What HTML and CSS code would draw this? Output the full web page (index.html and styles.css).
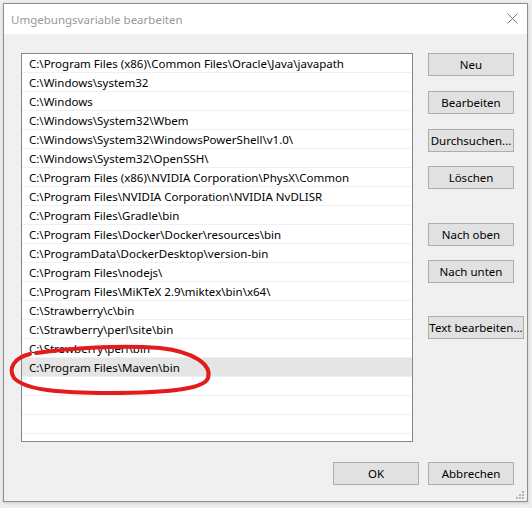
FILE: index.html
```html
<!DOCTYPE html>
<html lang="de">
<head>
<meta charset="utf-8">
<title>Umgebungsvariable bearbeiten</title>
<link rel="stylesheet" href="styles.css">
</head>
<body>
<div class="screen">
  <div class="dialog">
    <div class="titlebar">
      <span class="title">Umgebungsvariable bearbeiten</span>
      <svg class="close" width="11" height="11" viewBox="0 0 11 11"><path d="M0.5 0.5 L10.5 10.5 M10.5 0.5 L0.5 10.5" stroke="#7a7a7a" stroke-width="1" fill="none"/></svg>
    </div>
    <div class="content">
      <div class="main">
        <ul class="list">
          <li>C:\Program Files (x86)\Common Files\Oracle\Java\javapath</li>
          <li>C:\Windows\system32</li>
          <li>C:\Windows</li>
          <li>C:\Windows\System32\Wbem</li>
          <li>C:\Windows\System32\WindowsPowerShell\v1.0\</li>
          <li>C:\Windows\System32\OpenSSH\</li>
          <li>C:\Program Files (x86)\NVIDIA Corporation\PhysX\Common</li>
          <li>C:\Program Files\NVIDIA Corporation\NVIDIA NvDLISR</li>
          <li>C:\Program Files\Gradle\bin</li>
          <li>C:\Program Files\Docker\Docker\resources\bin</li>
          <li>C:\ProgramData\DockerDesktop\version-bin</li>
          <li>C:\Program Files\nodejs\</li>
          <li>C:\Program Files\MiKTeX 2.9\miktex\bin\x64\</li>
          <li>C:\Strawberry\c\bin</li>
          <li>C:\Strawberry\perl\site\bin</li>
          <li>C:\Strawberry\perl\bin</li>
          <li class="selected">C:\Program Files\Maven\bin</li>
          <li></li>
          <li></li>
          <li></li>
        </ul>
        <div class="buttons">
          <button class="btn">Neu</button>
          <button class="btn gap15">Bearbeiten</button>
          <button class="btn gap15">Durchsuchen...</button>
          <button class="btn">Löschen</button>
          <button class="btn gap-group">Nach oben</button>
          <button class="btn">Nach unten</button>
          <button class="btn wide gap-group2">Text bearbeiten...</button>
        </div>
      </div>
      <div class="footer">
        <button class="btn">OK</button>
        <button class="btn">Abbrechen</button>
      </div>
    </div>
    <svg class="grip" width="8" height="8" viewBox="0 0 8 8">
      <rect x="6" y="0" width="2" height="2" fill="#b4b4b4"/>
      <rect x="3" y="3" width="2" height="2" fill="#b4b4b4"/>
      <rect x="6" y="3" width="2" height="2" fill="#b4b4b4"/>
      <rect x="0" y="6" width="2" height="2" fill="#b4b4b4"/>
      <rect x="3" y="6" width="2" height="2" fill="#b4b4b4"/>
      <rect x="6" y="6" width="2" height="2" fill="#b4b4b4"/>
    </svg>
  </div>
  <svg class="scribble" width="532" height="508" viewBox="0 0 532 508">
    <path d="M36 353 C 70 348, 120 345, 160 348 C 195 352, 212 365, 208 378 C 204 390, 160 393, 110 393 C 60 393, 25 390, 14 378 C 8 368, 14 358, 30 354" fill="none" stroke="#e31b1b" stroke-width="4" stroke-linecap="round" stroke-linejoin="round"/>
  </svg>
</div>
</body>
</html>
```
FILE: styles.css
```css
html, body {
  margin: 0;
  padding: 0;
}
body {
  background: #eeeeee;
  font-family: "Noto Sans", "DejaVu Sans", sans-serif;
  font-size: 11.5px;
  color: #000;
}
.screen {
  position: relative;
  width: 532px;
  height: 508px;
  overflow: hidden;
  padding-top: 3px;
  padding-left: 3px;
  box-sizing: border-box;
}
.dialog {
  position: relative;
  width: 525px;
  height: 499px;
  box-sizing: border-box;
  border: 1px solid #8e8e8e;
  background: #f0f0f0;
  box-shadow: 0 1px 3px rgba(0,0,0,0.15);
  display: flex;
  flex-direction: column;
}
.titlebar {
  height: 30px;
  background: #fff;
  display: flex;
  align-items: center;
  padding-left: 7px;
  padding-right: 9px;
  flex-shrink: 0;
}
.title {
  color: #999999;
  font-size: 11.5px;
}
.close {
  margin-left: auto;
  margin-top: -2px;
}
.content {
  padding: 19px 13px 0 17px;
  display: flex;
  flex-direction: column;
}
.main {
  display: flex;
  gap: 15px;
  align-items: flex-start;
}
.list {
  flex: 0 0 392px;
  width: 392px;
  height: 389px;
  box-sizing: border-box;
  margin: 0;
  padding: 0;
  list-style: none;
  background: #fff;
  border: 1px solid #828790;
  overflow: hidden;
}
.list li {
  height: 19px;
  box-sizing: border-box;
  border-bottom: 1px solid #f0f0f0;
  padding-left: 7px;
  padding-top: 2px;
  line-height: 16px;
  white-space: nowrap;
}
.list li.selected {
  background: #e5e5e5;
}
.buttons {
  flex: 0 0 86px;
  width: 86px;
  display: flex;
  flex-direction: column;
  align-items: flex-start;
  gap: 14px;
}
.btn {
  flex-shrink: 0;
  width: 86px;
  height: 23px;
  box-sizing: border-box;
  border: 1px solid #adadad;
  background: #e1e1e1;
  font-family: inherit;
  font-size: 11.5px;
  color: #000;
  padding: 0;
  margin: 0;
  white-space: nowrap;
}
.btn.wide {
  width: 96px;
}
.gap15 {
  margin-top: 1px;
}
.gap-group {
  margin-top: 20px;
}
.gap-group2 {
  margin-top: 19px;
}
.footer {
  display: flex;
  justify-content: flex-end;
  gap: 9px;
  margin-top: 20px;
}
.grip {
  position: absolute;
  right: 3px;
  bottom: 2px;
}
.scribble {
  position: absolute;
  top: 0;
  left: 0;
  pointer-events: none;
}
```
